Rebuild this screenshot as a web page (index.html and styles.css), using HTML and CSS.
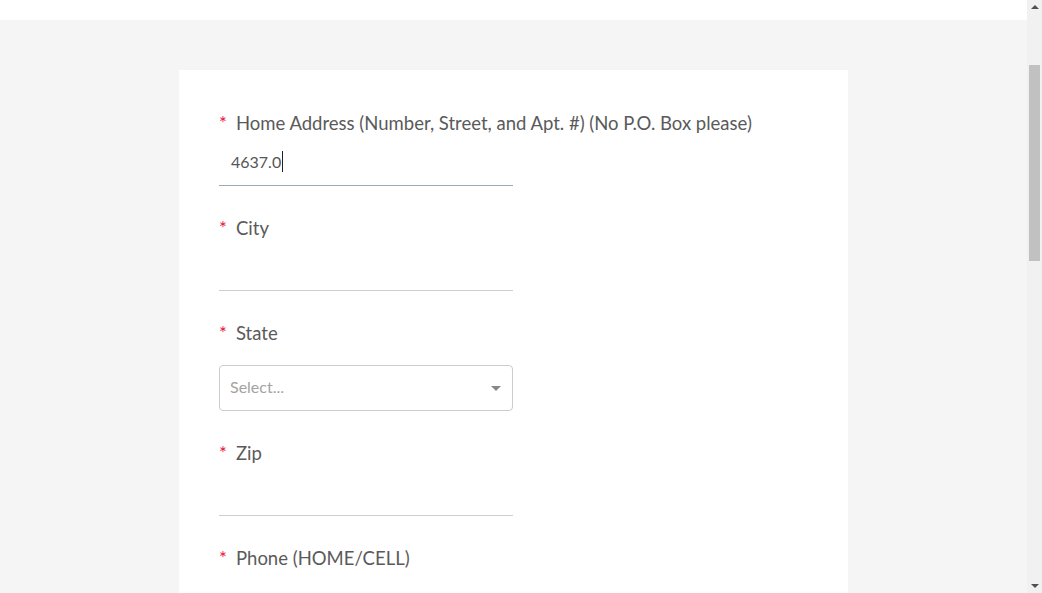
FILE: index.html
```html
<!DOCTYPE html>
<html lang="en">
<head>
<meta charset="utf-8">
<title>Address form</title>
<link rel="stylesheet" href="styles.css">
</head>
<body>
<div class="window">
  <div class="viewport">
    <header class="top-bar"></header>
    <main class="page">
      <form class="card">
        <div class="field">
          <label class="label"><span class="req">*</span>Home Address (Number, Street, and Apt. #) (No P.O. Box please)</label>
          <div class="text-input focused"><span class="value">4637.0</span><span class="caret"></span></div>
        </div>
        <div class="field">
          <label class="label"><span class="req">*</span>City</label>
          <div class="text-input"></div>
        </div>
        <div class="field">
          <label class="label"><span class="req">*</span>State</label>
          <div class="select">
            <span class="placeholder">Select...</span>
            <span class="arrow"></span>
          </div>
        </div>
        <div class="field">
          <label class="label"><span class="req">*</span>Zip</label>
          <div class="text-input"></div>
        </div>
        <div class="field">
          <label class="label"><span class="req">*</span>Phone (HOME/CELL)</label>
          <div class="text-input"></div>
        </div>
      </form>
    </main>
  </div>
  <div class="scrollbar">
    <div class="sb-btn"><span class="sb-up"></span></div>
    <div class="sb-track"><div class="sb-thumb"></div></div>
    <div class="sb-btn"><span class="sb-down"></span></div>
  </div>
</div>
</body>
</html>
```
FILE: styles.css
```css
html, body {
  margin: 0;
  padding: 0;
}
body {
  background: #f5f5f5;
  font-family: "Lato", "Open Sans", sans-serif;
  color: #555;
  overflow: hidden;
}
.window {
  display: flex;
  height: 593px;
  overflow: hidden;
}
.viewport {
  flex: 1;
  overflow: hidden;
  background: #f5f5f5;
}
.top-bar {
  height: 20px;
  background: #fff;
}
.page {
  padding: 50px 0 0 179px;
}
.card {
  width: 669px;
  background: #fff;
  padding: 41px 40px 60px;
  box-sizing: border-box;
}
.field {
  width: 294px;
  margin-bottom: 30px;
}
.label {
  display: block;
  white-space: nowrap;
  font-size: 18.5px;
  line-height: 24px;
  color: #5a5a5a;
}
.req {
  color: #e8173f;
  display: inline-block;
  width: 17px;
}
.text-input {
  height: 51px;
  border-bottom: 1px solid #cfcfcf;
  display: flex;
  align-items: center;
  padding: 3px 0 0 12px;
  box-sizing: border-box;
  font-size: 16px;
  color: #555;
}
.text-input.focused {
  border-bottom-color: #9aa9bb;
}
.caret {
  display: inline-block;
  width: 1px;
  height: 21px;
  background: #222;
  margin-left: 1px;
}
.select {
  margin-top: 20px;
  height: 46px;
  border: 1px solid #cccccc;
  border-radius: 4px;
  box-sizing: border-box;
  display: flex;
  align-items: center;
  justify-content: space-between;
  padding: 0 10px 3px 10px;
  font-size: 16px;
}
.placeholder {
  color: #a3a3a3;
}
.arrow {
  width: 0;
  height: 0;
  border-left: 5px solid transparent;
  border-right: 5px solid transparent;
  border-top: 5px solid #888;
  margin: 3px 1px 0 0;
}
.scrollbar {
  width: 15px;
  flex: none;
  background: #f1f1f1;
  display: flex;
  flex-direction: column;
}
.sb-btn {
  height: 17px;
  display: flex;
  align-items: center;
  justify-content: center;
}
.sb-up, .sb-down {
  width: 0;
  height: 0;
  border-left: 4px solid transparent;
  border-right: 4px solid transparent;
}
.sb-up {
  border-bottom: 4px solid #505050;
  margin-top: -3px;
}
.sb-down {
  border-top: 4px solid #505050;
  margin-top: 3px;
}
.sb-track {
  flex: 1;
  padding: 48px 2px 0;
}
.sb-thumb {
  height: 196px;
  background: #c1c1c1;
}
```
